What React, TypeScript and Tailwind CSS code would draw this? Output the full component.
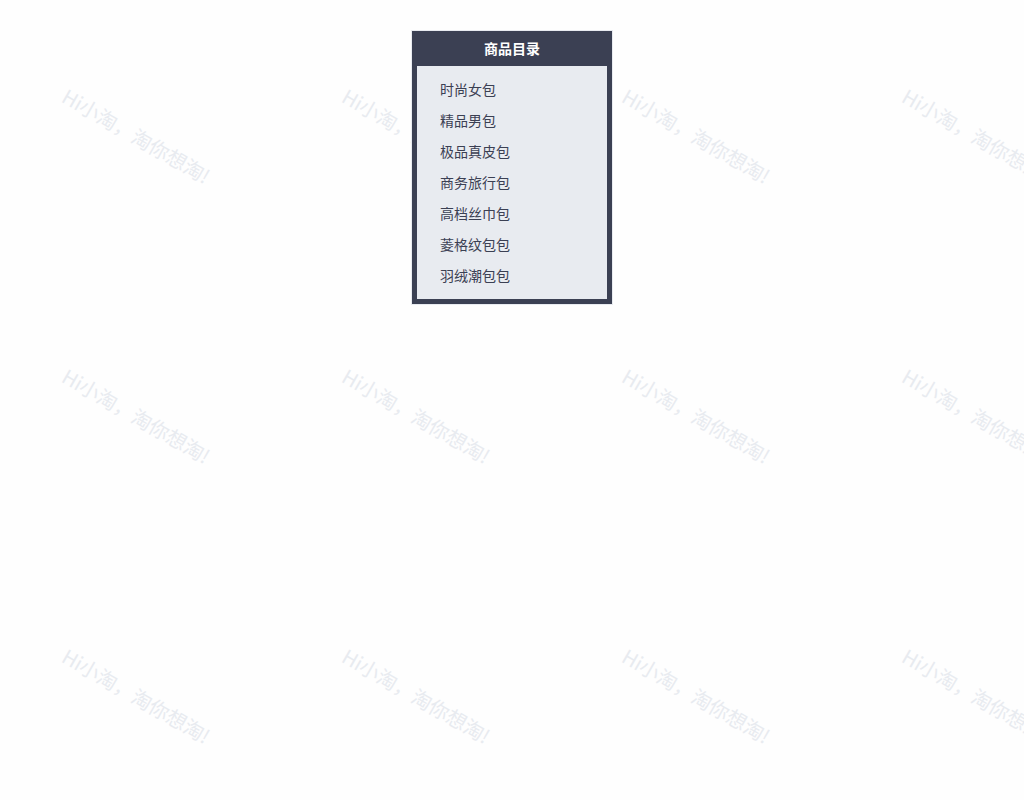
import React from 'react';

const categories = [
  '时尚女包',
  '精品男包',
  '极品真皮包',
  '商务旅行包',
  '高档丝巾包',
  '菱格纹包包',
  '羽绒潮包包',
];

const Watermark = () => (
  <div
    aria-hidden="true"
    className="absolute inset-0 overflow-hidden select-none pointer-events-none"
  >
    <div className="grid w-[calc(100%+280px)] grid-cols-[repeat(auto-fill,280px)] auto-rows-[280px]">
      {Array.from({ length: 12 }, (_, i) => (
        <div key={i} className="flex items-center justify-center pr-2 pb-2">
          <span className="rotate-30 whitespace-nowrap text-xl text-[#e8ebf0]">
            Hi小淘，淘你想淘!
          </span>
        </div>
      ))}
    </div>
  </div>
);

const App = () => {
  return (
    <main className="relative min-h-screen bg-[#fefefe] pt-[31px] font-['Noto_Sans_CJK_SC',sans-serif]">
      <Watermark />

      {/* Category menu */}
      <nav className="relative mx-auto w-[200px] border-5 border-[#3b4053] bg-[#e8ebf0] text-sm text-[#3b4053] ring-1 ring-[#e8ebf0]">
        <h2 className="h-[30px] bg-[#3b4053] text-center leading-6 font-bold text-white">
          商品目录
        </h2>
        <ul className="px-[23px] py-2">
          {categories.map((name) => (
            <li key={name} className="leading-[31px]">
              <a href="#" className="hover:underline">
                {name}
              </a>
            </li>
          ))}
        </ul>
      </nav>
    </main>
  );
};

export default App;
